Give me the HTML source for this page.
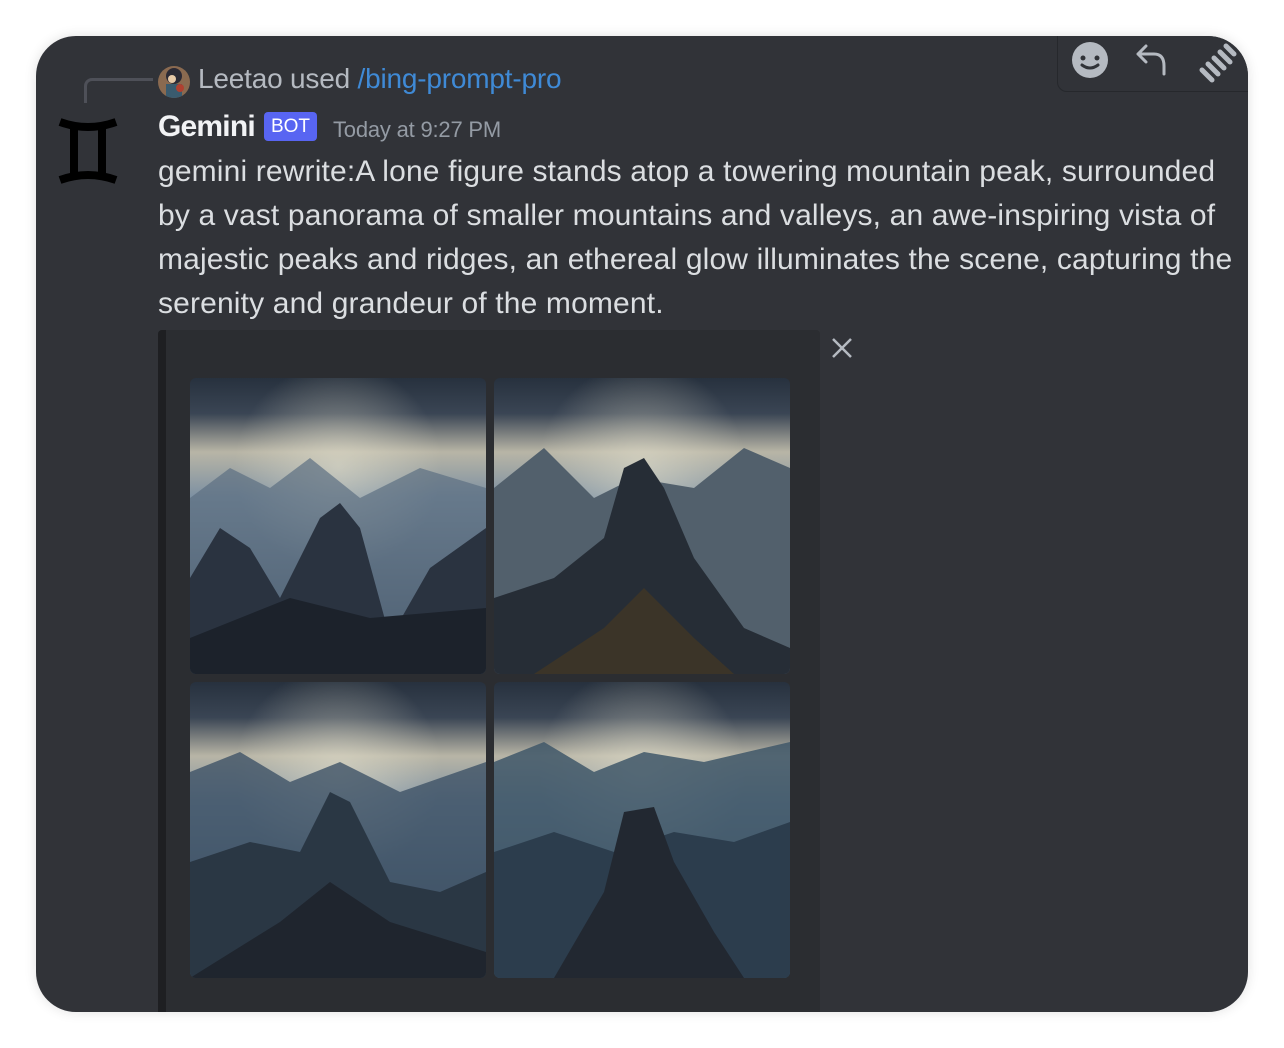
<!DOCTYPE html>
<html><head><meta charset="utf-8"><style>
body{margin:0;width:1284px;height:1048px;background:#fff;overflow:hidden;font-family:"Liberation Sans",sans-serif;position:relative}
.card{position:absolute;left:36px;top:36px;width:1212px;height:976px;background:#313338;border-radius:40px;overflow:hidden;box-shadow:0 0 12px rgba(0,0,0,.12)}
.abs{position:absolute}
.txt{left:122px;top:114px;color:#dbdee1;font-size:30px;line-height:44px;letter-spacing:0.15px;white-space:nowrap}
.img{position:absolute;width:296px;height:296px;border-radius:6px;overflow:hidden}
</style></head><body>
<div class="card">
  <div class="abs" style="left:1021px;top:-10px;width:220px;height:64px;border:1px solid #26282c;border-radius:10px;background:#313338"></div>
  <svg class="abs" style="left:1034px;top:4px" width="40" height="40" viewBox="0 0 40 40"><circle cx="20" cy="20" r="18" fill="#b5bac1"/><circle cx="13" cy="18" r="2.5" fill="#313338"/><circle cx="27" cy="18" r="2.5" fill="#313338"/><path d="M12 25 Q20 31 28 25" stroke="#313338" stroke-width="3" fill="none" stroke-linecap="round"/></svg>
  <svg class="abs" style="left:1098px;top:6px" width="36" height="36" viewBox="0 0 36 36"><path d="M12 4 L4 12 L12 20 M4 12 H20 Q30 12 30 24 V32" stroke="#b5bac1" stroke-width="3" fill="none" stroke-linecap="round" stroke-linejoin="round"/></svg>
  <svg class="abs" style="left:1160px;top:4px" width="44" height="44" viewBox="0 0 44 44"><g stroke="#b5bac1" stroke-width="5" stroke-linecap="round"><path d="M6 30 L16 40"/><path d="M12 24 L22 34"/><path d="M18 18 L28 28"/><path d="M24 12 L34 22"/><path d="M30 6 L38 14"/></g></svg>

  <div class="abs" style="left:48px;top:42px;width:66px;height:22px;border-left:3px solid #4e5058;border-top:3px solid #4e5058;border-top-left-radius:8px"></div>
  <svg class="abs" style="left:122px;top:30px" width="32" height="32"><defs><clipPath id="c"><circle cx="16" cy="16" r="16"/></clipPath></defs><g clip-path="url(#c)"><rect width="32" height="32" fill="#8a6a50"/><circle cx="16" cy="10" r="8" fill="#2b2a35"/><rect x="8" y="18" width="16" height="14" fill="#3a5b6e"/><circle cx="14" cy="13" r="4" fill="#e6c9a8"/><circle cx="22" cy="22" r="4" fill="#b04030"/></g></svg>
  <div class="abs" style="left:162px;top:27px;font-size:28px;color:#b5bac1;letter-spacing:-0.2px;white-space:nowrap">Leetao used <span style="color:#3f8ad6">/bing-prompt-pro</span></div>

  <svg class="abs" style="left:18px;top:80px" width="68" height="72" viewBox="0 0 68 72"><g fill="none" stroke="#000" stroke-width="8"><path d="M6 6 Q34 16 62 6"/><path d="M6 64 Q34 54 62 64"/><path d="M20 12 V58"/><path d="M48 12 V58"/></g></svg>

  <div class="abs" style="left:122px;top:74px;font-size:30px;color:#f2f3f5;font-weight:600;letter-spacing:-0.8px">Gemini</div>
  <div class="abs" style="left:228px;top:76px;width:53px;height:29px;background:#5865f2;border-radius:4px;color:#fff;font-size:19px;line-height:29px;text-align:center">BOT</div>
  <div class="abs" style="left:297px;top:81px;font-size:22px;color:#949ba4;letter-spacing:-0.2px">Today at 9:27 PM</div>

  <div class="abs txt">gemini rewrite:A lone figure stands atop a towering mountain peak, surrounded<br>by a vast panorama of smaller mountains and valleys, an awe-inspiring vista of<br>majestic peaks and ridges, an ethereal glow illuminates the scene, capturing the<br>serenity and grandeur of the moment.</div>

  <div class="abs" style="left:122px;top:294px;width:654px;height:700px;background:#2b2d31;border-left:8px solid #1e1f22;border-radius:4px"></div>
  <svg class="abs" style="left:794px;top:300px" width="24" height="24"><path d="M3 3 L21 21 M21 3 L3 21" stroke="#b5bac1" stroke-width="2.5"/></svg>

  <svg width="0" height="0" style="position:absolute"><defs>
    <linearGradient id="sky" x1="0" y1="0" x2="0" y2="1"><stop offset="0" stop-color="#27313e"/><stop offset=".12" stop-color="#3a4554"/><stop offset=".25" stop-color="#b8b5a6"/><stop offset=".4" stop-color="#7e91a2"/><stop offset="1" stop-color="#2a3a4c"/></linearGradient>
    <radialGradient id="glow" cx=".5" cy=".3" r=".35"><stop offset="0" stop-color="#e8e4d0" stop-opacity=".55"/><stop offset="1" stop-color="#e8e4d0" stop-opacity="0"/></radialGradient>
  </defs></svg>

  <div class="img" style="left:154px;top:342px"><svg width="296" height="296"><rect width="296" height="296" fill="url(#sky)"/><rect width="296" height="296" fill="url(#glow)"/><path d="M0 120 L40 90 L80 110 L120 80 L170 120 L230 90 L296 110 V296 H0Z" fill="#5c6f82" opacity=".7"/><path d="M0 200 L30 150 L60 170 L90 220 L130 140 L150 125 L170 150 L200 260 L240 190 L296 150 V296 H0Z" fill="#2a3340"/><path d="M0 260 L100 220 L180 240 L296 230 V296 H0Z" fill="#1c222b"/></svg></div>
  <div class="img" style="left:458px;top:342px"><svg width="296" height="296"><rect width="296" height="296" fill="url(#sky)"/><rect width="296" height="296" fill="url(#glow)"/><path d="M0 110 L50 70 L100 120 L140 100 L200 110 L250 70 L296 90 V296 H0Z" fill="#52606c"/><path d="M0 220 L60 200 L110 160 L130 90 L150 80 L170 110 L200 180 L250 250 L296 270 V296 H0Z" fill="#262d36"/><path d="M40 296 L110 250 L150 210 L200 260 L240 296Z" fill="#3b3428"/></svg></div>
  <div class="img" style="left:154px;top:646px"><svg width="296" height="296"><rect width="296" height="296" fill="url(#sky)"/><rect width="296" height="296" fill="url(#glow)"/><path d="M0 90 L50 70 L100 100 L150 80 L210 110 L296 80 V296 H0Z" fill="#3e5366" opacity=".8"/><path d="M0 180 L60 160 L110 170 L140 110 L160 120 L200 200 L250 210 L296 190 V296 H0Z" fill="#2a3744"/><path d="M0 296 L90 240 L140 200 L200 240 L296 270 V296Z" fill="#1f252e"/></svg></div>
  <div class="img" style="left:458px;top:646px"><svg width="296" height="296"><rect width="296" height="296" fill="url(#sky)"/><rect width="296" height="296" fill="url(#glow)"/><path d="M0 80 L50 60 L100 90 L150 70 L210 80 L296 60 V296 H0Z" fill="#3f5769" opacity=".85"/><path d="M0 170 L60 150 L120 170 L180 150 L240 160 L296 140 V296 H0Z" fill="#2c3d4d"/><path d="M60 296 L110 210 L130 130 L160 125 L180 180 L220 250 L250 296Z" fill="#222831"/></svg></div>
</div>
</body></html>
